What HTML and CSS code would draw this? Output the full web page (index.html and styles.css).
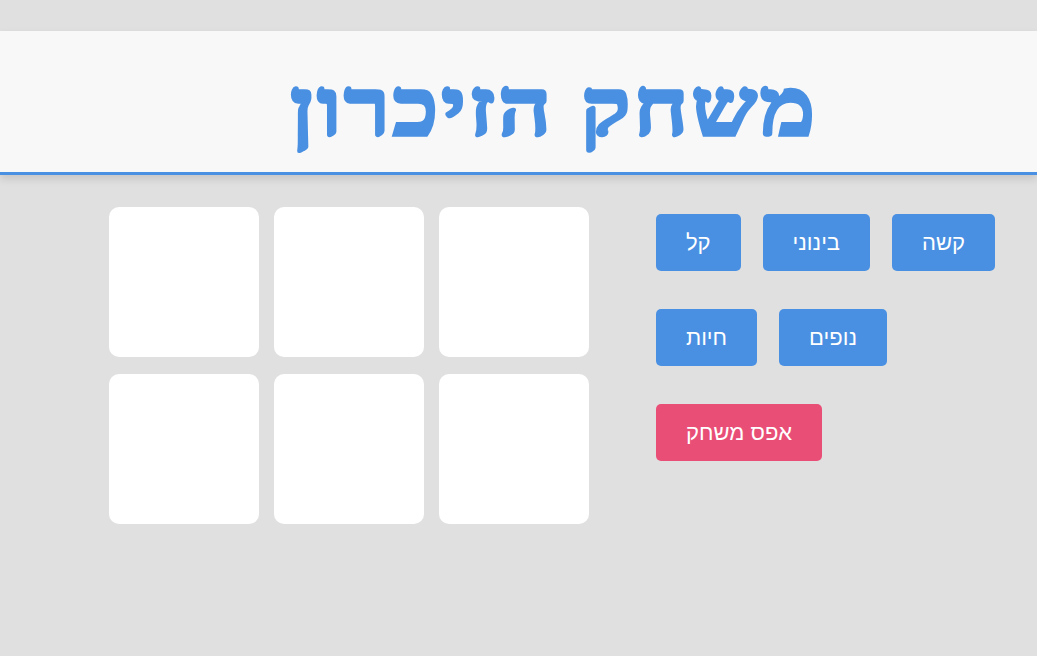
FILE: index.html
```html
<!DOCTYPE html>
<html lang="he" dir="rtl">
<head>
<meta charset="utf-8">
<title>משחק הזיכרון</title>
<link rel="stylesheet" href="styles.css">
</head>
<body>
<header class="header">
  <h1 class="title">משחק הזיכרון</h1>
</header>
<main class="main">
  <section class="controls">
    <div class="row">
      <button class="btn">קשה</button>
      <button class="btn">בינוני</button>
      <button class="btn">קל</button>
    </div>
    <div class="row">
      <button class="btn">נופים</button>
      <button class="btn">חיות</button>
    </div>
    <div class="row">
      <button class="btn btn-reset">אפס משחק</button>
    </div>
  </section>
  <section class="board">
    <div class="card"></div>
    <div class="card"></div>
    <div class="card"></div>
    <div class="card"></div>
    <div class="card"></div>
    <div class="card"></div>
  </section>
</main>
</body>
</html>
```
FILE: styles.css
```css
html, body {
  margin: 0;
  padding: 0;
}
body {
  background: #e0e0e0;
  font-family: "Liberation Sans", Arial, sans-serif;
  padding-top: 31px;
}
.header {
  background: #f8f8f8;
  border-bottom: 3px solid #4a90e2;
  box-shadow: 0 4px 8px rgba(0,0,0,0.12);
  height: 144px;
  box-sizing: border-box;
  padding-top: 12px;
  display: flex;
  align-items: center;
  justify-content: center;
  padding-left: 72px;
}
.title {
  margin: 0;
  font-family: "Liberation Serif", serif;
  font-weight: bold;
  font-size: 80px;
  color: #4a90e2;
  line-height: 1;
  letter-spacing: 3px;
  -webkit-text-stroke: 3.5px #4a90e2;
  transform: scaleX(1.15);
}
.main {
  display: flex;
  padding: 32px 42px 0 0;
  gap: 67px;
  align-items: flex-start;
}
.controls {
  display: flex;
  flex-direction: column;
  align-items: flex-end;
  gap: 38px;
  padding-top: 7px;
}
.row {
  display: flex;
  gap: 22px;
}
.btn {
  background: #4a90e2;
  color: #fff;
  border: none;
  border-radius: 5px;
  font-family: "Liberation Sans", Arial, sans-serif;
  font-size: 22px;
  height: 57px;
  padding: 0 30px;
  cursor: pointer;
}
.btn-reset {
  background: #e94e77;
}
.board {
  display: grid;
  grid-template-columns: repeat(3, 150px);
  column-gap: 15px;
  row-gap: 17px;
}
.card {
  width: 150px;
  height: 150px;
  background: #fff;
  border-radius: 10px;
}
```
